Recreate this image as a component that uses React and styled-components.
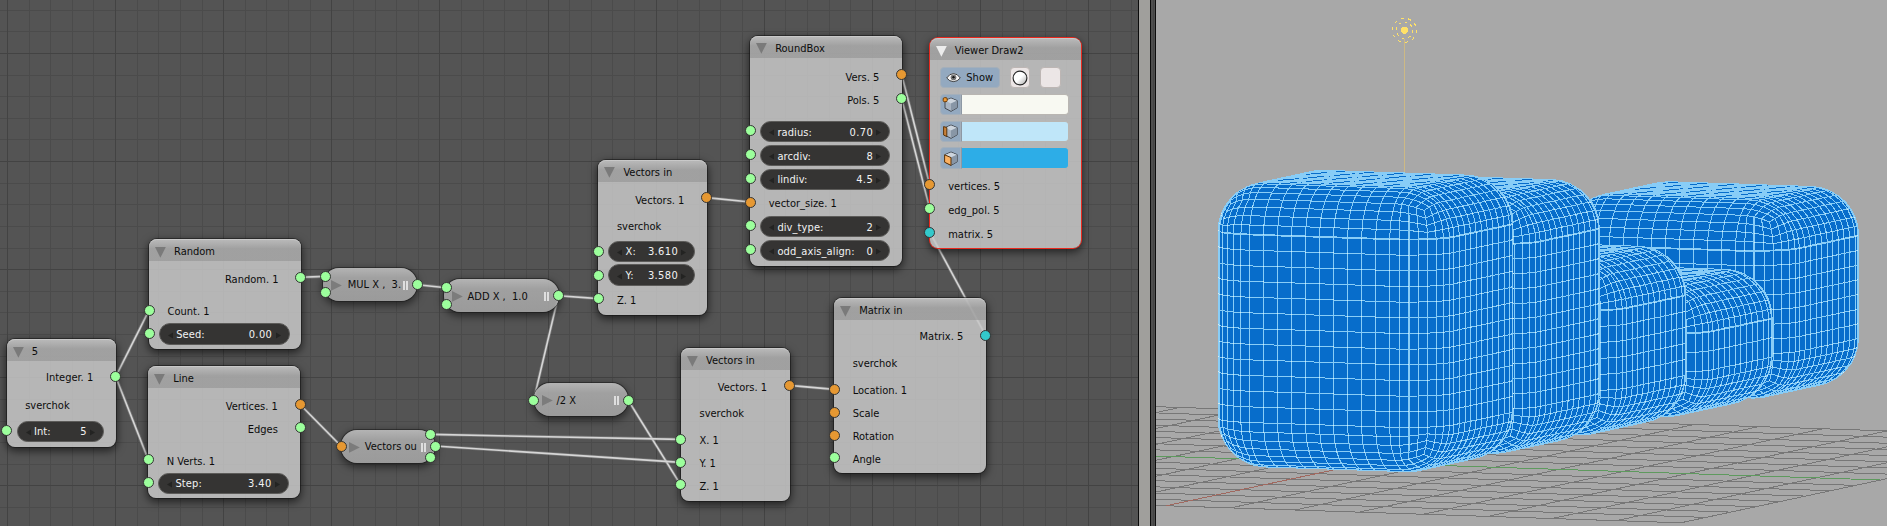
import React from "react";
import styled, { createGlobalStyle } from "styled-components";

const GlobalStyle = createGlobalStyle`
  body { margin: 0; background: #545454; }
  * { box-sizing: border-box; }
`;

const Screen = styled.div`
  display: flex;
  width: 1887px;
  height: 526px;
  overflow: hidden;
  font-family: "DejaVu Sans Condensed", "DejaVu Sans", sans-serif;
  font-stretch: condensed;
  font-size: 11px;
  line-height: 16px;
  color: #0c0c0c;
`;

const NodeEditor = styled.div`
  position: relative;
  width: 1138px;
  height: 526px;
  overflow: hidden;
  background: #545454;
`;

const Layer = styled.svg`
  display: block;
`;

const Scrollbar = styled.div`
  width: 13px;
  background: #a09f9c;
  border-left: 1px solid #0c0c0c;
  border-right: 1px solid #0c0c0c;
`;

const Divider = styled.div`
  width: 5px;
  background: linear-gradient(90deg, #4e4e4e 0 2px, #444 2px 3px, #4e4e4e 3px);
  border-right: 1px solid #0c0c0c;
`;

const Viewport = styled.div`
  flex: 1;
  background: #a8a8a8;
`;

const NodeBox = styled.div`
  position: absolute;
  left: ${(p) => p.$x}px;
  top: ${(p) => p.$y}px;
  width: ${(p) => p.$w}px;
  height: ${(p) => p.$h}px;
  display: flex;
  flex-direction: column;
  border-radius: 8px;
  background: rgba(198, 198, 198, 0.86);
  box-shadow:
    0 0 0 1px ${(p) => (p.$active ? "#e8291e" : "rgba(20,20,20,.55)")},
    0 3px 8px 1px rgba(0, 0, 0, 0.6);
`;

const Header = styled.div`
  display: flex;
  align-items: center;
  height: 22px;
  flex: none;
  padding: 4px 0 0 6px;
  gap: 8px;
  border-radius: 8px 8px 0 0;
  background: linear-gradient(rgba(190, 190, 190, 0.6), rgba(146, 146, 146, 0.6) 45%, rgba(146, 146, 146, 0.6));
  box-shadow: inset 0 1px 0 rgba(215, 215, 215, 0.5);
  white-space: pre;
`;

const Outputs = styled.div`
  display: flex;
  flex-direction: column;
  align-items: flex-end;
  gap: 7px;
  padding: ${(p) => p.$top || 10}px 22.5px 0 0;
`;

const Inputs = styled.div`
  display: flex;
  flex-direction: column;
  gap: ${(p) => p.$gap || 7}px;
  margin-top: auto;
  padding-bottom: ${(p) => p.$bottom}px;
`;

const Sliders = styled.div`
  display: flex;
  flex-direction: column;
  gap: 2.4px;
`;

const Label = styled.div`
  height: 16px;
  line-height: 17px;
  padding-left: ${(p) => (p.$out ? 0 : 18.5)}px;
  white-space: pre;
`;

const Slider = styled.div`
  display: flex;
  align-items: center;
  height: 21.4px;
  margin: 0 11.5px 0 10px;
  padding: 2px 8px 0;
  gap: 3.2px;
  border-radius: 11px;
  background: #353433;
  border: 1px solid #5c5b59;
  color: #f2f2f2;
  white-space: pre;
`;

const SliderName = styled.span`
  flex: 1;
  letter-spacing: 0.1px;
`;

const SliderValue = styled.span`
  letter-spacing: 0.4px;
`;

const Panel = styled.div`
  display: flex;
  flex-direction: column;
  gap: 5.5px;
  padding: 6.8px 0 0 10px;
`;

const Tools = styled.div`
  display: flex;
  gap: ${(p) => p.$gap || 0}px;
  height: 21.4px;
`;

const ToolButton = styled.div`
  display: flex;
  align-items: center;
  justify-content: center;
  width: ${(p) => p.$w}px;
  padding-top: 1px;
  gap: 5px;
  border-radius: ${(p) => p.$radius || "4px"};
  background: ${(p) => (p.$on ? "#93a9c0" : "#ece6e6")};
  border: 1px solid ${(p) => (p.$on ? "#a4afba" : "#bdb6b4")};
`;

const Swatch = styled.div`
  width: 108px;
  border-radius: 0 4px 4px 0;
  background: ${(p) => p.$color};
  border: 1px solid #b9b6b2;
  border-left-color: #8d98a4;
`;

const Pill = styled.div`
  position: absolute;
  left: ${(p) => p.$x}px;
  top: ${(p) => p.$y}px;
  width: ${(p) => p.$w}px;
  height: 32.5px;
  display: flex;
  align-items: center;
  justify-content: space-between;
  padding: 2px 9.5px 0 7.5px;
  border-radius: 16px;
  background: linear-gradient(rgba(190, 190, 190, 0.9), rgba(166, 166, 166, 0.93) 30%, rgba(160, 160, 160, 0.93));
  box-shadow: 0 0 0 1px rgba(25, 25, 25, 0.55), 0 3px 8px 1px rgba(0, 0, 0, 0.55);
  white-space: pre;
`;

const PillTitle = styled.div`
  display: flex;
  align-items: center;
  gap: ${(p) => p.$gap}px;
`;

const Socket = styled.div`
  position: absolute;
  left: ${(p) => p.$x - 5.5}px;
  top: ${(p) => p.$y - 5.5}px;
  width: 11px;
  height: 11px;
  border-radius: 50%;
  background: ${(p) => p.$c};
  border: 1px solid #343434;
`;

const Down = ({ color = "#7a7a7a" }) => (
  <svg width="11" height="11"><path d="M0 0H10.8L5.4 10.8Z" fill={color} /></svg>
);
const Right = () => (
  <svg width="11" height="11"><path d="M0 0V10.8L10.8 5.4Z" fill="#7c7c7c" /></svg>
);
const Grip = () => (
  <svg width="5" height="11"><path d="M1 1V10M4 1V10" stroke="#eee" strokeWidth="1.6" /></svg>
);
const Arrow = ({ flip }) => (
  <svg width="5" height="7"><path d={flip ? "M0 .5V6.5L5 3.5Z" : "M5 .5V6.5L0 3.5Z"} fill="#232322" /></svg>
);
const Eye = () => (
  <svg width="15" height="11" viewBox="0 0 15 11">
    <path d="M.7 6Q3.5 1.6 7.5 1.6Q11.5 1.6 14.3 6Q11.5 9.6 7.5 9.6Q3.5 9.6 .7 6Z" fill="#f6f6f6" stroke="#2a2a2a" strokeWidth=".9" />
    <circle cx="7.5" cy="5.4" r="2.5" fill="#8b8b8b" stroke="#444" strokeWidth=".6" />
    <circle cx="7.5" cy="5.2" r="1.2" fill="#111" />
  </svg>
);
const Ball = () => (
  <svg width="16" height="16" viewBox="0 0 16 16">
    <defs>
      <linearGradient id="ball" x1="0" y1="0" x2="1" y2="1">
        <stop offset=".5" stopColor="#fff" /><stop offset="1" stopColor="#a5a5a5" />
      </linearGradient>
    </defs>
    <circle cx="8" cy="8" r="6.9" fill="url(#ball)" stroke="#222" strokeWidth="1.1" />
  </svg>
);
const CubeIcon = ({ part }) => (
  <svg width="17" height="17" viewBox="0 0 17 17">
    <path d="M9 2L15.2 4.6V11.8L9 15.4L3 12.2V4.6Z" fill="#a9b4c1" stroke="#454b53" strokeWidth="1" strokeLinejoin="round" />
    <path d="M3.4 4.8L9 7.4L14.8 4.8L9 2.6Z" fill="#cdd5de" />
    <path d="M9 7.4L14.8 4.8V11.6L9 14.9Z" fill="#8896a6" />
    {part === "vertex" && <rect x="1.2" y="1.7" width="4" height="4" rx="1.2" fill="#f09a35" stroke="#6b3c08" />}
    {part === "edge" && <path d="M1.6 3.6L4.8 4.6V13.6L1.6 12Z" fill="#c8813a" stroke="#5b350d" />}
    {part === "face" && <path d="M2.6 4.8L9 7.6V15.4L2.6 12.2Z" fill="#fbb162" stroke="#5b350d" />}
  </svg>
);

const Num = ({ name, value }) => (
  <Slider>
    <Arrow />
    <SliderName>{name}</SliderName>
    <SliderValue>{value}</SliderValue>
    <Arrow flip />
  </Slider>
);

const ColorRow = ({ part, color }) => (
  <Tools>
    <ToolButton $w={21} $on $radius="4px 0 0 4px"><CubeIcon part={part} /></ToolButton>
    <Swatch $color={color} />
  </Tools>
);

const Node = ({ x, y, w, h, title, active, children }) => (
  <NodeBox $x={x} $y={y} $w={w} $h={h} $active={active}>
    <Header><Down color={active ? "#ececec" : undefined} />{title}</Header>
    {children}
  </NodeBox>
);

const Collapsed = ({ x, y, w, title, gap = 6 }) => (
  <Pill $x={x} $y={y} $w={w}>
    <PillTitle $gap={gap}><Right />{title}</PillTitle>
    <Grip />
  </Pill>
);

const GREEN = "#9cff9c";
const ORANGE = "#e69832";
const CYAN = "#33c9cb";
const SOCKETS = [
  [115.7, 376.7, GREEN], [6.3, 430.5, GREEN],
  [300.5, 277.3, GREEN], [149, 310.3, GREEN], [149, 333.3, GREEN],
  [300, 404.5, ORANGE], [300, 427.5, GREEN], [148.3, 459.6, GREEN], [148.3, 482.6, GREEN],
  [325.6, 276.4, GREEN], [325.6, 292.6, GREEN], [417.4, 284.7, GREEN],
  [446, 287.7, GREEN], [446, 304, GREEN], [558.4, 295.7, GREEN],
  [533.7, 400, GREEN], [628, 400, GREEN],
  [341, 446, ORANGE], [430.4, 434.4, GREEN], [435, 446, GREEN], [430.4, 457.6, GREEN],
  [598.5, 251.7, GREEN], [598.5, 275.4, GREEN], [598.5, 298.6, GREEN], [706.6, 197.6, ORANGE],
  [680.7, 439.4, GREEN], [680.7, 462.4, GREEN], [680.7, 484.8, GREEN], [789.2, 385.4, ORANGE],
  [750.2, 130.6, GREEN], [750.2, 154.4, GREEN], [750.2, 178, GREEN], [750.2, 202, ORANGE], [750.2, 225.7, GREEN], [750.2, 249.5, GREEN],
  [901.5, 74, ORANGE], [901.5, 98, GREEN],
  [929.7, 184.7, ORANGE], [929.7, 208.4, GREEN], [929.7, 232, CYAN],
  [834.3, 389.4, ORANGE], [834.3, 412.4, ORANGE], [834.3, 435, ORANGE], [834.3, 457.7, GREEN], [985.7, 335.6, CYAN],
];

const LINKS = [
  [115.7, 376.7, 149, 310.3], [115.7, 376.7, 148.3, 459.6], [300.5, 277.3, 325.6, 276.4],
  [417.4, 284.7, 446, 287.7], [558.4, 295.7, 598.5, 298.6], [558.4, 295.7, 533.7, 400],
  [628, 400, 680.7, 484.8], [300, 404.5, 341, 446], [430.4, 434.4, 680.7, 439.4],
  [435, 446, 680.7, 462.4], [706.6, 197.6, 750.2, 202], [789.2, 385.4, 834.3, 389.4],
  [901.5, 74, 929.7, 184.7], [901.5, 98, 929.7, 208.4], [929.7, 232, 985.7, 335.6],
];

const gridPath = (keep) => {
  let d = "";
  for (let k = 0; k < 54; k++) {
    const x = Math.floor(7.5 + k * 21.62) + 0.5;
    if (keep(k)) d += `M${x} 0V526`;
  }
  for (let k = -2; k < 24; k++) {
    const y = Math.floor(53.5 + k * 21.62) + 0.5;
    if (keep(k)) d += `M0 ${y}H1138`;
  }
  return d;
};
const GRID_MINOR = gridPath((k) => k % 5 !== 0);
const GRID_MAJOR = gridPath((k) => k % 5 === 0);

/* Orthographic projection of the 3D scene: screen vectors of one unit along each axis */
const VY = [64.3, 2.13];
const VX = [25.2, -5.4];
const VZ = -67.6;
const R = 0.716;

const FACES = [
  { n: [-1, 0, 0], a: [0, 1, 0], b: [0, 0, 1] },
  { n: [1, 0, 0], a: [0, -1, 0], b: [0, 0, 1] },
  { n: [0, 1, 0], a: [1, 0, 0], b: [0, 0, 1] },
  { n: [0, -1, 0], a: [-1, 0, 0], b: [0, 0, 1] },
  { n: [0, 0, 1], a: [0, 1, 0], b: [1, 0, 0] },
  { n: [0, 0, -1], a: [0, 1, 0], b: [-1, 0, 0] },
];

/* samples over one face direction: half-arc, straight part, half-arc */
const samples = (half, div) => {
  const out = [];
  for (let k = -4; k < 0; k++) out.push([-half, Math.tan((k * Math.PI) / 16)]);
  for (let k = 0; k <= div; k++) out.push([-half + (2 * half * k) / div, 0]);
  for (let k = 1; k <= 4; k++) out.push([half, Math.tan((k * Math.PI) / 16)]);
  return out;
};

/* cx, cy: screen place of the near right arc centre at the lower end of the straight part */
const roundBox = (cx, cy, flatPx, zDiv) => {
  const half = [1.105, 1.09, -flatPx / VZ / 2];
  const divs = [10, 10, zDiv];
  const project = (p) => {
    const x = p[0] + half[0];
    const y = p[1] - half[1];
    const z = p[2] + half[2];
    return [cx + x * VX[0] + y * VY[0], cy + x * VX[1] + y * VY[1] + z * VZ];
  };
  const f = (v) => v.toFixed(1);
  const seen = new Set();
  let fill = "";
  let lines = "";
  let dots = "";
  let bold = "";
  FACES.forEach(({ n, a, b }, fi) => {
    const ai = a.findIndex((v) => v);
    const bi = b.findIndex((v) => v);
    const ni = n.findIndex((v) => v);
    const A = samples(half[ai], divs[ai]);
    const B = samples(half[bi], divs[bi]);
    const pts = A.map(([pa, ta]) =>
      B.map(([pb, tb]) => {
        const len = Math.hypot(ta, tb, 1);
        const p = [0, 0, 0];
        p[ni] = n[ni] * (half[ni] + R / len);
        p[ai] = a[ai] * (pa + (R * ta) / len);
        p[bi] = b[bi] * (pb + (R * tb) / len);
        return project(p);
      })
    );
    const edge = (p, q) => {
      const s = [`${f(p[0])} ${f(p[1])}`, `${f(q[0])} ${f(q[1])}`].sort();
      const key = s.join("L");
      if (!seen.has(key)) {
        seen.add(key);
        lines += `M${key}`;
      }
    };
    for (let i = 0; i < A.length - 1; i++) {
      for (let j = 0; j < B.length - 1; j++) {
        const [p, q, r, s] = [pts[i][j], pts[i + 1][j], pts[i + 1][j + 1], pts[i][j + 1]];
        const area = (r[0] - p[0]) * (s[1] - q[1]) - (s[0] - q[0]) * (r[1] - p[1]);
        if (area >= 0) continue;
        fill += `M${f(p[0])} ${f(p[1])}L${f(q[0])} ${f(q[1])}L${f(r[0])} ${f(r[1])}L${f(s[0])} ${f(s[1])}Z`;
        edge(p, q);
        edge(q, r);
        edge(s, r);
        edge(p, s);
        const top = 4 + divs[2];
        if ((fi === 0 || fi === 2) && j === top) bold += `M${f(p[0])} ${f(p[1])}L${f(q[0])} ${f(q[1])}`;
        if (fi === 0 && i === 16) bold += `M${f(p[0])} ${f(p[1])}L${f(s[0])} ${f(s[1])}`;
        if (fi < 4 && (i * 7 + j * 5) % 8 < 5) dots += `M${Math.floor(p[0])} ${Math.floor(p[1])}h1v1h-1Z`;
      }
    }
  });
  return { fill, lines, dots, bold };
};

const HEIGHTS = [[188, 12], [165, 11], [80, 5], [38.5, 2], [103, 7]];
const BOXES = HEIGHTS.map(([h, d], i) => roundBox(251.8 + i * 86.4, 423.3 - i * 18.4, h, d)).reverse();

const floorLines = () => {
  const O = [210, 463];
  const at = (x, y) => [O[0] + x * 24.95 + y * 64.3, O[1] - x * 5.34 + y * 2.13].map((v) => v.toFixed(1)).join(" ");
  let d = "";
  for (let k = -8; k <= 8; k++) {
    if (k) d += `M${at(k, -8)}L${at(k, 8)}M${at(-8, k)}L${at(8, k)}`;
  }
  return { d, green: `M${at(0, -8)}L${at(0, 8)}`, red: `M${at(-8, 0)}L${at(8, 0)}` };
};
const FLOOR = floorLines();

const Scene = () => (
  <svg width="731" height="526" fill="none" shapeRendering="crispEdges">
    <path d={FLOOR.d} stroke="#777" />
    <path d={FLOOR.green} stroke="#5e9a5e" />
    <path d={FLOOR.red} stroke="#a0685f" />
    <path d="M248.5 39V175" stroke="#cdb984" />
    {BOXES.map((b, i) => (
      <g key={i}>
        <path d={b.fill} fill="#076dcb" />
        <path d={b.lines} stroke="#88cdf7" />
        <path d={b.bold} stroke="#88cdf7" strokeWidth="1.8" />
        <path d={b.dots} fill="#d3ecf4" />
      </g>
    ))}
    <circle cx="248.5" cy="30.3" r="3.5" fill="#ffe168" />
    <circle cx="248.5" cy="30.3" r="8.2" stroke="#ffe168" strokeDasharray="3 3.4" />
    <circle cx="248.5" cy="30.3" r="12" stroke="#ffe168" strokeDasharray="3 4.5" />
  </svg>
);

export default function App() {
  return (
    <Screen>
      <GlobalStyle />
      <NodeEditor>
        <Layer width="1138" height="526" fill="none">
          <path d={GRID_MINOR} stroke="#4b4b4b" />
          <path d={GRID_MAJOR} stroke="#434343" />
          {LINKS.map(([a, b, c, d], i) => (
            <g key={i}>
              <line x1={a} y1={b} x2={c} y2={d} stroke="#999" strokeOpacity=".45" strokeWidth="3.2" />
              <line x1={a} y1={b} x2={c} y2={d} stroke="#d6d6d6" strokeWidth="1.6" />
            </g>
          ))}
        </Layer>

        <Node x={6.7} y={339.3} w={109} h={107.4} title="5">
          <Outputs $top={8}><Label $out>Integer. 1</Label></Outputs>
          <Inputs $gap={7.6} $bottom={4.7}>
            <Label>sverchok</Label>
            <Num name="Int:" value="5" />
          </Inputs>
        </Node>
        <Node x={149} y={239} w={152} h={110} title="Random">
          <Outputs><Label $out>Random. 1</Label></Outputs>
          <Inputs $gap={4} $bottom={4.3}>
            <Label>Count. 1</Label>
            <Num name="Seed:" value="0.00" />
          </Inputs>
        </Node>
        <Node x={148.3} y={366.4} w={152} h={132} title="Line">
          <Outputs>
            <Label $out>Vertices. 1</Label>
            <Label $out>Edges</Label>
          </Outputs>
          <Inputs $gap={3.4} $bottom={4.5}>
            <Label>N Verts. 1</Label>
            <Num name="Step:" value="3.40" />
          </Inputs>
        </Node>
        <Collapsed x={323.3} y={268.2} w={94} title="MUL X ,  3." />
        <Collapsed x={444} y={279.4} w={114.5} title="ADD X ,  1.0" gap={5} />
        <Collapsed x={534} y={383.4} w={94} title="/2 X" gap={4} />
        <Collapsed x={341.3} y={430} w={94} title="Vectors ou" gap={5} />
        <Node x={598.4} y={159.5} w={108.5} h={155} title="Vectors in">
          <Outputs><Label $out>Vectors. 1</Label></Outputs>
          <Inputs $gap={6.4} $bottom={6.3}>
            <Label>sverchok</Label>
            <Sliders>
              <Num name="X:" value="3.610" />
              <Num name="Y:" value="3.580" />
            </Sliders>
            <Label>Z. 1</Label>
          </Inputs>
        </Node>
        <Node x={681} y={348} w={108.5} h={152.5} title="Vectors in">
          <Outputs $top={8.6}>
            <Label $out>Vectors. 1</Label>
          </Outputs>
          <Inputs $gap={11} $bottom={6.2}>
            <Label>sverchok</Label>
            <Inputs $bottom={0}>
              <Label>X. 1</Label>
              <Label>Y. 1</Label>
              <Label>Z. 1</Label>
            </Inputs>
          </Inputs>
        </Node>
        <Node x={750.2} y={35.5} w={151.6} h={230.5} title="RoundBox">
          <Outputs $top={11}>
            <Label $out>Vers. 5</Label>
            <Label $out>Pols. 5</Label>
          </Outputs>
          <Inputs $gap={5} $bottom={4.8}>
            <Sliders>
              <Num name="radius:" value="0.70" />
              <Num name="arcdiv:" value="8" />
              <Num name="lindiv:" value="4.5" />
            </Sliders>
            <Label>vector_size. 1</Label>
            <Sliders>
              <Num name="div_type:" value="2" />
              <Num name="odd_axis_align:" value="0" />
            </Sliders>
          </Inputs>
        </Node>
        <Node x={929.7} y={38} w={151.6} h={210.3} title="Viewer Draw2" active>
          <Panel>
            <Tools $gap={10}>
              <ToolButton $w={60} $on><Eye />Show</ToolButton>
              <ToolButton $w={20}><Ball /></ToolButton>
              <ToolButton $w={21} />
            </Tools>
            <ColorRow part="vertex" color="#f8f9f2" />
            <ColorRow part="edge" color="#bfe6f9" />
            <ColorRow part="face" color="#2dade7" />
          </Panel>
          <Inputs $gap={8} $bottom={6}>
            <Label>vertices. 5</Label>
            <Label>edg_pol. 5</Label>
            <Label>matrix. 5</Label>
          </Inputs>
        </Node>
        <Node x={834.2} y={298} w={151.6} h={175.2} title="Matrix in">
          <Outputs $top={8}><Label $out>Matrix. 5</Label></Outputs>
          <Inputs $gap={11} $bottom={6}>
            <Label>sverchok</Label>
            <Inputs $bottom={0}>
              <Label>Location. 1</Label>
              <Label>Scale</Label>
              <Label>Rotation</Label>
              <Label>Angle</Label>
            </Inputs>
          </Inputs>
        </Node>

        {SOCKETS.map(([x, y, c], i) => (
          <Socket key={i} $x={x} $y={y} $c={c} />
        ))}
      </NodeEditor>
      <Scrollbar />
      <Divider />
      <Viewport>
        <Scene />
      </Viewport>
    </Screen>
  );
}
